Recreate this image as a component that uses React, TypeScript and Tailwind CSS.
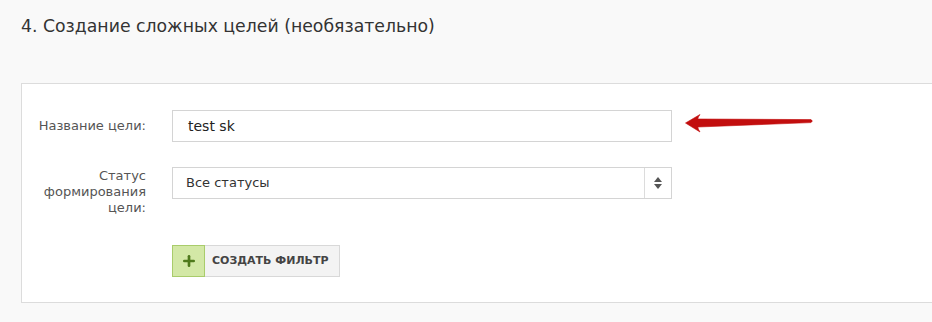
import { Plus } from 'lucide-react';

function RedArrow() {
  return (
    <svg width="130" height="20" viewBox="0 0 130 20" className="ml-[13px] -mt-[4px]">
      <path
        d="M0.5 9 L15 0.5 Q13 3 12.8 5 L126 5.6 Q128.6 7 126 8.6 L12.8 13 Q13 15 15 18 Z"
        fill="#c20e0e"
        stroke="#c20e0e"
        strokeWidth="0.6"
        strokeLinejoin="round"
      />
    </svg>
  );
}

function SortArrows() {
  return (
    <svg width="10" height="14" viewBox="0 0 10 14">
      <path d="M5 1 L9 6 H1 Z" fill="#555" />
      <path d="M5 13 L9 8 H1 Z" fill="#555" />
    </svg>
  );
}

export default function App() {
  return (
    <div
      className="h-[322px] w-[932px] overflow-hidden bg-[#f9f9f9] text-[#333]"
      style={{ fontFamily: '"DejaVu Sans", Verdana, sans-serif' }}
    >
      <h2 className="pl-[21px] pt-[13px] text-[17.3px] leading-[26px] text-[#333]">
        4. Создание сложных целей (необязательно)
      </h2>

      <div className="ml-[21px] mt-[44px] h-[220px] w-[960px] border border-[#dcdcdc] bg-white pt-[26px]">
        {/* Название цели */}
        <div className="flex items-center">
          <div className="w-[124px] text-right text-[13px] text-[#555]">Название цели:</div>
          <div className="ml-[26px] flex h-[32px] w-[500px] items-center border border-[#d4d4d4] bg-white pl-[15px] text-[14px] text-[#222]">
            test sk
          </div>
          <RedArrow />
        </div>

        {/* Статус формирования цели */}
        <div className="mt-[25px] flex items-start">
          <div className="w-[124px] pt-[1px] text-right text-[13px] leading-[16px] text-[#555]">
            Статус
            <br />
            формирования
            <br />
            цели:
          </div>
          <div className="ml-[26px] flex h-[32px] w-[500px] items-center border border-[#d4d4d4] bg-white text-[13px] text-[#333]">
            <div className="flex-1 pl-[13px]">Все статусы</div>
            <div className="flex h-full w-[27px] items-center justify-center border-l border-[#dcdcdc]">
              <SortArrows />
            </div>
          </div>
        </div>

        {/* Создать фильтр */}
        <div className="ml-[150px] mt-[29px] flex h-[32px] w-[168px]">
          <div className="flex w-[33px] items-center justify-center border border-[#a9cc6b] bg-[#d3e8a6]">
            <Plus size={16} strokeWidth={4} color="#4f7a1c" />
          </div>
          <div className="flex flex-1 items-center border border-l-0 border-[#d8d8d8] bg-[#f3f3f3] pl-[7px] text-[11px] font-bold text-[#444]">
            СОЗДАТЬ ФИЛЬТР
          </div>
        </div>
      </div>
    </div>
  );
}
